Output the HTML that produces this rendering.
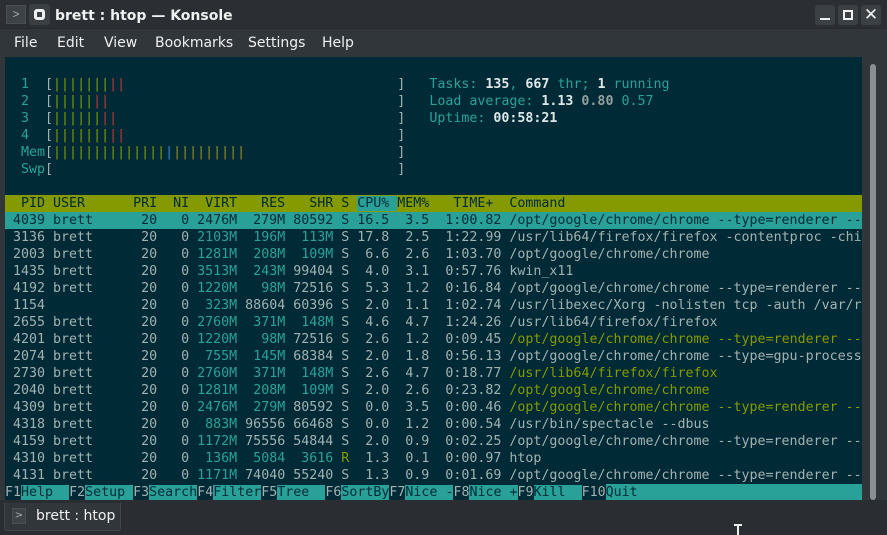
<!DOCTYPE html>
<html><head><meta charset="utf-8"><style>
*{margin:0;padding:0;box-sizing:border-box}
html,body{width:887px;height:535px;overflow:hidden;background:#31363b;font-family:"Liberation Sans","DejaVu Sans",sans-serif}
#title{position:absolute;left:0;top:0;width:887px;height:29px;background:#2b2f33;border-bottom:1px solid #25292c}
#title .t{position:absolute;left:55px;top:8px;color:#eff0f1;font-weight:bold;font-size:14px;font-family:"DejaVu Sans",sans-serif}
.wb{position:absolute;top:5px;width:20px;height:20px;background:#3b4045;border-radius:3px}
#menu{position:absolute;left:0;top:31px;height:26px;width:887px;color:#eff0f1;font-size:14px;font-family:"DejaVu Sans",sans-serif}
#menu span{position:absolute;top:4px}
#term{position:absolute;left:5px;top:57px;width:857px;height:443px;background:#002b36}
#scroll{position:absolute;left:870px;top:64px;width:6px;height:436px;background:#8a8f94;border-radius:3px}
.ln{position:absolute;left:5px;height:17px;line-height:17px;font-family:"DejaVu Sans Mono",monospace;font-size:13.3px;white-space:pre;color:#a3b1b3;margin-top:1px}
.t{color:#2aa198}.g{color:#859900}.r{color:#c03530}.b{color:#268bd2}.y{color:#a08b20}
.w{color:#dfe7e8;font-weight:bold}.gb{color:#93a1a1;font-weight:bold}
.hdr{background:#859900;color:#002b36;width:857px}
.sel{background:#2aa198;color:#002b36;width:857px}
.fk{color:#002b36;background:#2aa198}
#tabbar{position:absolute;left:0;top:500px;width:887px;height:35px;background:#2a2e32}
#tab{position:absolute;left:4px;top:503px;width:117px;height:28px;background:#31363b;border:1px solid #42474c;border-top:none;border-radius:0 0 3px 3px;color:#eff0f1;font-size:14px;font-family:"DejaVu Sans",sans-serif}
</style></head><body>
<div id="title">
 <div style="position:absolute;left:6px;top:5px;width:20px;height:19px;background:#3d4247;border:1px solid #4a4f54;color:#aaa;font-size:12px;text-align:center;line-height:17px">&gt;</div>
 <div style="position:absolute;left:29px;top:4px;width:21px;height:21px;background:#3a3f44;border-radius:3px"><div style="position:absolute;left:5px;top:5px;width:11px;height:11px;border:3px solid #eff0f1;border-radius:3px"></div></div>
 <span class="t">brett : htop — Konsole</span>
 <div class="wb" style="left:815px"><div style="position:absolute;left:5px;top:13px;width:10px;height:2px;background:#eff0f1"></div></div>
 <div class="wb" style="left:838px"><div style="position:absolute;left:5px;top:5px;width:10px;height:10px;border:2px solid #eff0f1"></div></div>
 <div class="wb" style="left:861px;color:#eff0f1;font-size:17px;text-align:center;line-height:20px">✕</div>
</div>
<div id="menu"><span style="left:14px">File</span><span style="left:57px">Edit</span><span style="left:104px">View</span><span style="left:155px">Bookmarks</span><span style="left:248px">Settings</span><span style="left:322px">Help</span></div>
<div id="term"></div>
<div id="scroll"></div>

<div class="ln" style="top:75px"><span class="t">  1  </span>[<span class="g">|||||||</span><span class="r">||</span>                                  ]   <span class="t">Tasks: </span><span class="w">135</span><span class="t">, </span><span class="w">667</span><span class="t"> thr; </span><span class="w">1</span><span class="t"> running</span></div>
<div class="ln" style="top:92px"><span class="t">  2  </span>[<span class="g">|||||</span><span class="r">||</span>                                    ]   <span class="t">Load average: </span><span class="w">1.13 </span><span class="gb">0.80 </span><span class="t">0.57</span></div>
<div class="ln" style="top:109px"><span class="t">  3  </span>[<span class="g">||||||</span><span class="r">||</span>                                   ]   <span class="t">Uptime: </span><span class="w">00:58:21</span></div>
<div class="ln" style="top:126px"><span class="t">  4  </span>[<span class="g">|||||||</span><span class="r">||</span>                                  ]</div>
<div class="ln" style="top:143px"><span class="t">  Mem</span>[<span class="g">||||||||||||||</span><span class="b">|</span><span class="y">|||||||||</span>                   ]</div>
<div class="ln" style="top:160px"><span class="t">  Swp</span>[                                           ]</div>

<div class="ln hdr" style="top:194px">  PID USER      PRI  NI  VIRT   RES   SHR S <span style="background:#2aa198">CPU% </span>MEM%   TIME+  Command</div>
<div class="ln sel" style="top:211px"> 4039 brett      20   0 2476M  279M 80592 S 16.5  3.5  1:00.82 /opt/google/chrome/chrome --type=renderer --</div>
<div class="ln" style="top:228px"> 3136 brett      20   0 <span class="t">2103M</span>  <span class="t">196M</span>  <span class="t">113M</span> S 17.8  2.5  1:22.99 /usr/lib64/firefox/firefox -contentproc -chi</div>
<div class="ln" style="top:245px"> 2003 brett      20   0 <span class="t">1281M</span>  <span class="t">208M</span>  <span class="t">109M</span> S  6.6  2.6  1:03.70 /opt/google/chrome/chrome</div>
<div class="ln" style="top:262px"> 1435 brett      20   0 <span class="t">3513M</span>  <span class="t">243M</span> 99404 S  4.0  3.1  0:57.76 kwin_x11</div>
<div class="ln" style="top:279px"> 4192 brett      20   0 <span class="t">1220M</span>   <span class="t">98M</span> 72516 S  5.3  1.2  0:16.84 /opt/google/chrome/chrome --type=renderer --</div>
<div class="ln" style="top:296px"> 1154            20   0  <span class="t">323M</span> 88604 60396 S  2.0  1.1  1:02.74 /usr/libexec/Xorg -nolisten tcp -auth /var/r</div>
<div class="ln" style="top:313px"> 2655 brett      20   0 <span class="t">2760M</span>  <span class="t">371M</span>  <span class="t">148M</span> S  4.6  4.7  1:24.26 /usr/lib64/firefox/firefox</div>
<div class="ln" style="top:330px"> 4201 brett      20   0 <span class="t">1220M</span>   <span class="t">98M</span> 72516 S  2.6  1.2  0:09.45 <span class="g">/opt/google/chrome/chrome --type=renderer --</span></div>
<div class="ln" style="top:347px"> 2074 brett      20   0  <span class="t">755M</span>  <span class="t">145M</span> 68384 S  2.0  1.8  0:56.13 /opt/google/chrome/chrome --type=gpu-process</div>
<div class="ln" style="top:364px"> 2730 brett      20   0 <span class="t">2760M</span>  <span class="t">371M</span>  <span class="t">148M</span> S  2.6  4.7  0:18.77 <span class="g">/usr/lib64/firefox/firefox</span></div>
<div class="ln" style="top:381px"> 2040 brett      20   0 <span class="t">1281M</span>  <span class="t">208M</span>  <span class="t">109M</span> S  2.0  2.6  0:23.82 <span class="g">/opt/google/chrome/chrome</span></div>
<div class="ln" style="top:398px"> 4309 brett      20   0 <span class="t">2476M</span>  <span class="t">279M</span> 80592 S  0.0  3.5  0:00.46 <span class="g">/opt/google/chrome/chrome --type=renderer --</span></div>
<div class="ln" style="top:415px"> 4318 brett      20   0  <span class="t">883M</span> 96556 66468 S  0.0  1.2  0:00.54 /usr/bin/spectacle --dbus</div>
<div class="ln" style="top:432px"> 4159 brett      20   0 <span class="t">1172M</span> 75556 54844 S  2.0  0.9  0:02.25 /opt/google/chrome/chrome --type=renderer --</div>
<div class="ln" style="top:449px"> 4310 brett      20   0  <span class="t">136M</span>  <span class="t">5084</span>  <span class="t">3616</span> <span class="g">R</span>  1.3  0.1  0:00.97 htop</div>
<div class="ln" style="top:466px"> 4131 brett      20   0 <span class="t">1171M</span> 74040 55240 S  1.3  0.9  0:01.69 /opt/google/chrome/chrome --type=renderer --</div>
<div class="ln" style="top:483px;width:857px;overflow:hidden">F1<span class="fk">Help  </span>F2<span class="fk">Setup </span>F3<span class="fk">Search</span>F4<span class="fk">Filter</span>F5<span class="fk">Tree  </span>F6<span class="fk">SortBy</span>F7<span class="fk">Nice -</span>F8<span class="fk">Nice +</span>F9<span class="fk">Kill  </span>F10<span class="fk" style="display:inline-block;width:257px">Quit</span></div>

<div id="tabbar"></div>
<div id="tab"><div style="position:absolute;left:7px;top:5px;width:14px;height:16px;background:#3d4247;border:1px solid #4a4f54;color:#aaa;font-size:10px;text-align:center;line-height:14px">&gt;</div><span style="position:absolute;left:31px;top:5px">brett : htop</span></div>
<div style="position:absolute;left:737px;top:524px;width:2px;height:11px;background:#eee"></div>
<div style="position:absolute;left:734px;top:524px;width:8px;height:2px;background:#eee"></div>
</body></html>
